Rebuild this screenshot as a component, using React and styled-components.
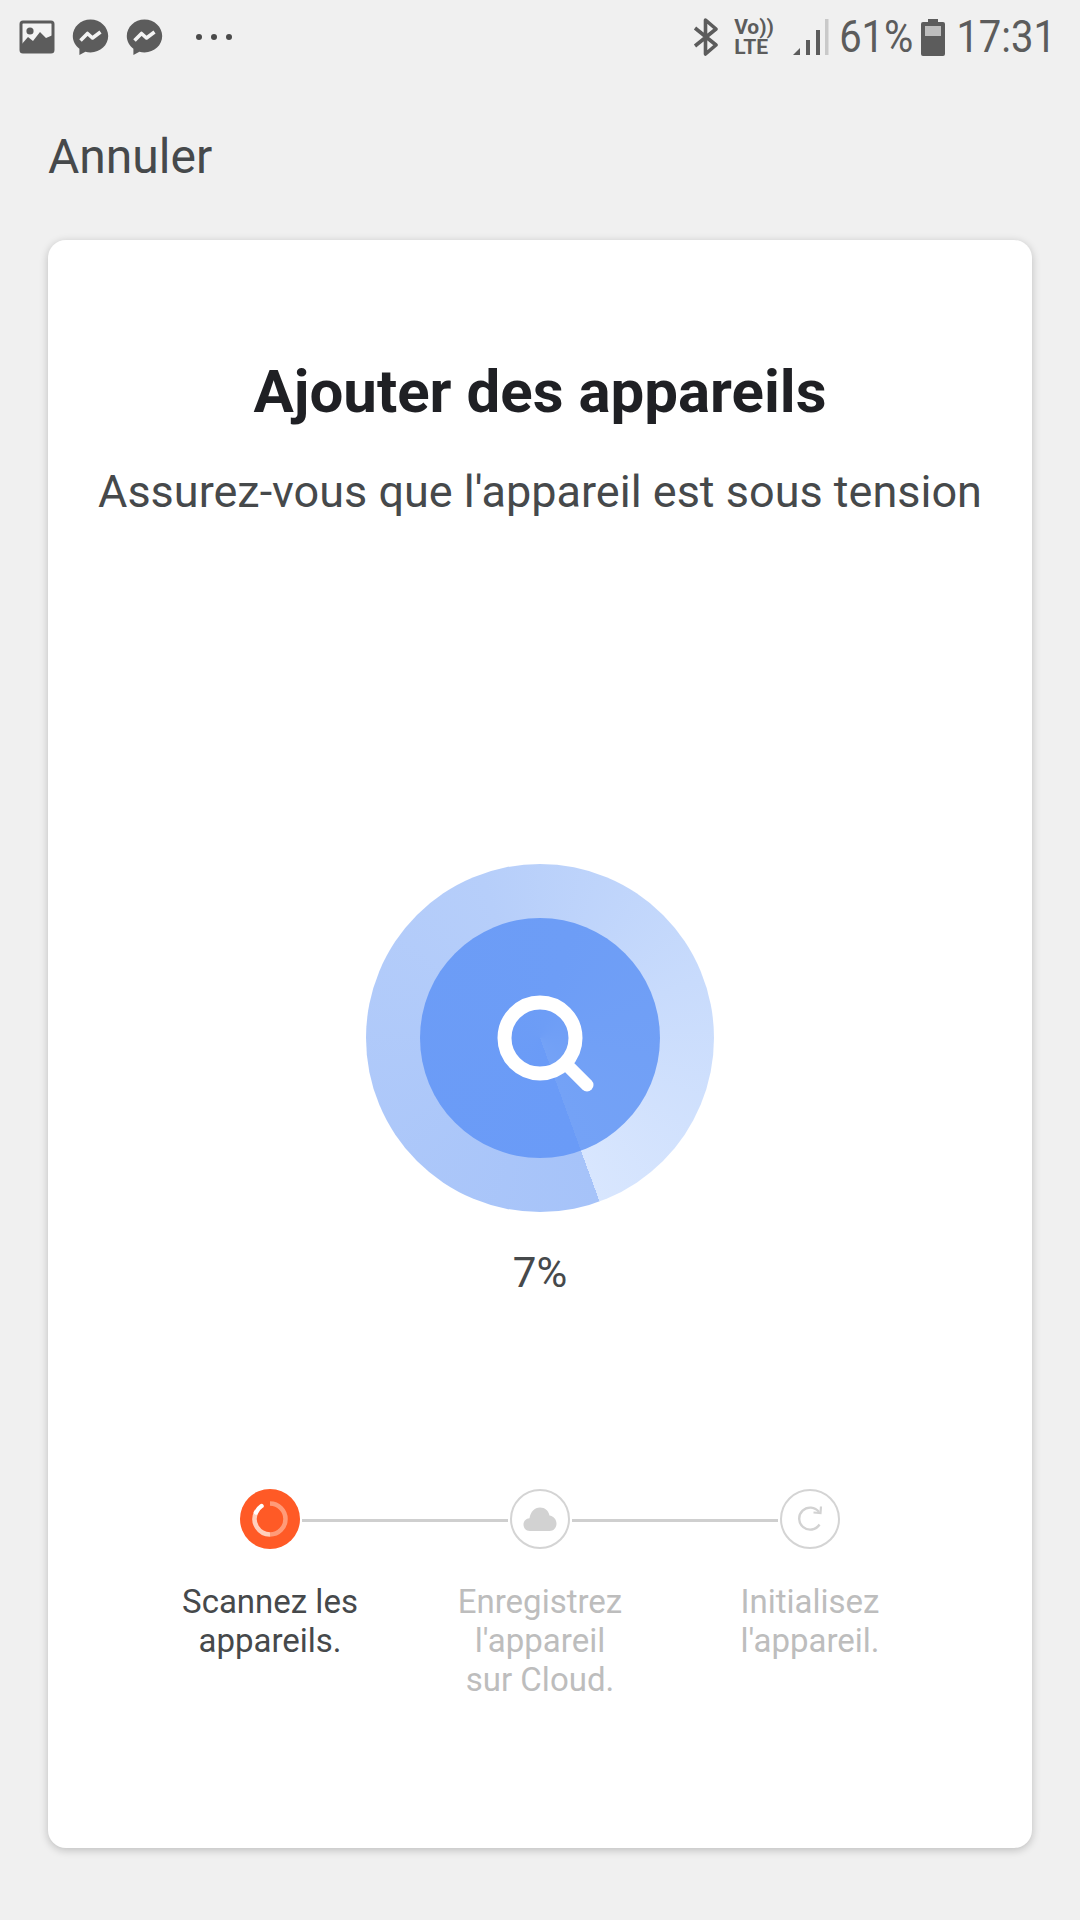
import React from "react";
import styled, { createGlobalStyle } from "styled-components";

const GlobalStyle = createGlobalStyle`
  html, body {
    margin: 0;
    padding: 0;
    background: #f0f0f0;
  }
  body {
    font-family: Roboto, "Liberation Sans", sans-serif;
  }
`;

const steps = [
  { label: ["Scannez les", "appareils."], active: true, icon: <SpinnerIcon /> },
  { label: ["Enregistrez", "l'appareil", "sur Cloud."], icon: <CloudIcon /> },
  { label: ["Initialisez", "l'appareil."], icon: <RefreshIcon /> },
];

function PictureIcon() {
  return (
    <svg width="36" height="34" viewBox="0 0 36 34">
      <rect x="2" y="2" width="32" height="30" rx="2" fill="#f4f4f4" stroke="#5c5c5c" strokeWidth="3" />
      <circle cx="11" cy="11" r="3.6" fill="#5c5c5c" />
      <path d="M2 25 L9 17 L14 21 L21 12 L27 18 L34 15 V33 H2 Z" fill="#5c5c5c" />
    </svg>
  );
}

function MessengerIcon() {
  return (
    <svg width="37" height="37" viewBox="0 0 37 37">
      <path
        d="M18.5 0.5 C8.6 0.5 0.8 8 0.8 17 C0.8 22.2 3.4 26.7 7.4 29.7 L7.4 36 L13.4 32.7 C15 33.2 16.7 33.4 18.5 33.4 C28.4 33.4 36.2 26 36.2 17 C36.2 8 28.4 0.5 18.5 0.5 Z"
        fill="#5c5c5c"
      />
      <path d="M8.5 21.5 L15.5 14.5 L20.5 19 L28.5 13" fill="none" stroke="#f4f4f4" strokeWidth="3.6" strokeLinejoin="round" />
    </svg>
  );
}

function BluetoothIcon() {
  return (
    <svg width="26" height="38" viewBox="0 0 26 38">
      <path d="M2 10 L23 27 L12.5 36 V2 L23 11 L2 28" fill="none" stroke="#5c5c5c" strokeWidth="3.6" strokeLinejoin="round" />
    </svg>
  );
}

function SignalIcon() {
  return (
    <svg width="36" height="38" viewBox="0 0 36 38">
      <path d="M0 37 L7 30 V37 Z" fill="#5c5c5c" />
      <rect x="13" y="22" width="4" height="15" fill="#5c5c5c" />
      <rect x="23" y="12" width="4" height="25" fill="#5c5c5c" />
      <rect x="32" y="1" width="3.5" height="36" fill="#c9c9c9" />
    </svg>
  );
}

function BatteryIcon() {
  return (
    <svg width="24" height="37" viewBox="0 0 24 37">
      <path d="M7 0 H17 V3 H22 Q24 3 24 5 V35 Q24 37 22 37 H2 Q0 37 0 35 V5 Q0 3 2 3 H7 Z" fill="#5c5c5c" />
      <rect x="4" y="7" width="16" height="10" fill="#bdbdbd" />
    </svg>
  );
}

function SearchIcon() {
  return (
    <svg width="110" height="110" viewBox="0 0 110 110">
      <circle cx="55" cy="55" r="35.5" fill="none" stroke="#fff" strokeWidth="14" />
      <path d="M82 82 L102 102" fill="none" stroke="#fff" strokeWidth="13" strokeLinecap="round" />
    </svg>
  );
}

function SpinnerIcon() {
  return (
    <svg width="40" height="40" viewBox="0 0 40 40">
      <path d="M20 4.5 A15.5 15.5 0 0 1 20 35.5" fill="none" stroke="#ffb196" strokeWidth="4.5" opacity="0.75" />
      <path d="M20 35.5 A15.5 15.5 0 0 1 6 13.5" fill="none" stroke="#ffd0bd" strokeWidth="4.5" />
      <path d="M6 13.5 A15.5 15.5 0 0 1 11.5 7" fill="none" stroke="#fff" strokeWidth="4.5" strokeLinecap="round" />
    </svg>
  );
}

function CloudIcon() {
  return (
    <svg width="34" height="26" viewBox="0 0 34 26">
      <path
        d="M7 25 C2.5 25 0.5 21.5 0.5 18.5 C0.5 15 3 12.5 6.5 12.2 C7.5 6 11.5 1.5 17 1.5 C22 1.5 25.5 4.5 26.5 9.5 C30.5 10 33.5 13.5 33.5 17.5 C33.5 22 30.5 25 26.5 25 Z"
        fill="#d2d2d2"
      />
    </svg>
  );
}

function RefreshIcon() {
  return (
    <svg width="28" height="28" viewBox="0 0 28 28">
      <path d="M23.5 19.5 A11 11 0 1 1 23 7" fill="none" stroke="#d2d2d2" strokeWidth="2.4" />
      <path d="M17.5 7.5 L24.5 8 L25 1.5" fill="none" stroke="#d2d2d2" strokeWidth="2.2" />
    </svg>
  );
}

export default function App() {
  return (
    <>
      <GlobalStyle />
      <Screen>
        <StatusBar>
          <StatusGroup $gap={17}>
            <PictureIcon />
            <MessengerIcon />
            <MessengerIcon />
            <Dots>
              <Dot />
              <Dot />
              <Dot />
            </Dots>
          </StatusGroup>
          <StatusGroup $gap={8}>
            <BluetoothIcon />
            <Volte>
              <span>Vo))</span>
              <span>LTE</span>
            </Volte>
            <SignalIcon />
            <Percent>61%</Percent>
            <BatteryIcon />
            <Clock>17:31</Clock>
          </StatusGroup>
        </StatusBar>
        <Cancel>Annuler</Cancel>
        <Card>
          <Title>Ajouter des appareils</Title>
          <Subtitle>Assurez-vous que l'appareil est sous tension</Subtitle>
          <Radar>
            <RadarCore>
              <SearchIcon />
            </RadarCore>
          </Radar>
          <Progress>7%</Progress>
          <Track>
            {steps.map((step, i) => (
              <React.Fragment key={step.label[0]}>
                {i > 0 && <Connector />}
                <Node $active={step.active}>{step.icon}</Node>
              </React.Fragment>
            ))}
          </Track>
          <Labels>
            {steps.map((step) => (
              <Label key={step.label[0]} $active={step.active}>
                {step.label.map((line) => (
                  <div key={line}>{line}</div>
                ))}
              </Label>
            ))}
          </Labels>
        </Card>
      </Screen>
    </>
  );
}

const Screen = styled.div`
  width: 1080px;
  height: 1920px;
  background: #f0f0f0;
  overflow: hidden;
`;

const StatusBar = styled.div`
  height: 74px;
  padding: 0 24px 0 19px;
  display: flex;
  justify-content: space-between;
  align-items: center;
`;

const StatusGroup = styled.div`
  display: flex;
  align-items: center;
  gap: ${(props) => props.$gap}px;
`;

const Dots = styled.div`
  display: flex;
  gap: 9px;
  margin-left: 16px;
`;

const Dot = styled.span`
  width: 6px;
  height: 6px;
  border-radius: 50%;
  background: #4a4a4a;
`;

const Volte = styled.div`
  display: flex;
  flex-direction: column;
  color: #5c5c5c;
  font-size: 21px;
  font-weight: 700;
  line-height: 20px;
  width: 38px;
  margin: 0 13px 0 7px;
`;

const StatusText = styled.span`
  color: #5c5c5c;
  font-size: 40px;
  line-height: 44px;
  transform: scaleY(1.12);
`;

const Percent = styled(StatusText)`
  margin-left: 2px;
`;

const Clock = styled(StatusText)`
  margin-left: 3px;
`;

const Cancel = styled.div`
  margin: 57px 0 0 48px;
  color: #46494b;
  font-size: 48px;
  line-height: 52px;
`;

const Card = styled.div`
  margin: 57px 48px 0;
  height: 1489px;
  padding-top: 119px;
  background: #fff;
  border-radius: 18px;
  box-shadow: 0 2px 8px rgba(0, 0, 0, 0.22);
  display: flex;
  flex-direction: column;
  align-items: center;
`;

const Title = styled.h1`
  margin: 0;
  color: #1f2024;
  font-size: 60px;
  font-weight: 700;
  line-height: 66px;
`;

const Subtitle = styled.p`
  margin: 42px 0 0;
  color: #46494b;
  font-size: 45px;
  line-height: 50px;
  white-space: nowrap;
`;

const Radar = styled.div`
  margin-top: 347px;
  width: 348px;
  height: 348px;
  border-radius: 50%;
  background: conic-gradient(from 160deg, #a6c3f9, #b6cefa 50%, #c8dbfc 75%, #d8e6fe);
  display: flex;
  align-items: center;
  justify-content: center;
`;

const RadarCore = styled.div`
  width: 240px;
  height: 240px;
  border-radius: 50%;
  background: conic-gradient(from 160deg, #6a9bf7, #6d9df6 60%, #74a2f6);
  display: flex;
  align-items: center;
  justify-content: center;
`;

const Progress = styled.div`
  margin-top: 39px;
  color: #46494b;
  font-size: 42px;
  line-height: 44px;
`;

const Track = styled.div`
  margin-top: 194px;
  width: 600px;
  display: flex;
  align-items: center;
`;

const Node = styled.div`
  width: 60px;
  height: 60px;
  box-sizing: border-box;
  flex: none;
  border-radius: 50%;
  display: flex;
  align-items: center;
  justify-content: center;
  background: ${(props) => (props.$active ? "#ff5a26" : "#fff")};
  border: ${(props) => (props.$active ? "none" : "2px solid #d4d4d4")};
`;

const Connector = styled.div`
  flex: 1;
  height: 3px;
  margin: 2px 2px 0;
  background: #cfcfcf;
`;

const Labels = styled.div`
  margin-top: 33px;
  width: 810px;
  display: grid;
  grid-template-columns: repeat(3, 270px);
`;

const Label = styled.div`
  text-align: center;
  font-size: 33px;
  line-height: 39px;
  color: ${(props) => (props.$active ? "#46494b" : "#bdbdbd")};
`;
